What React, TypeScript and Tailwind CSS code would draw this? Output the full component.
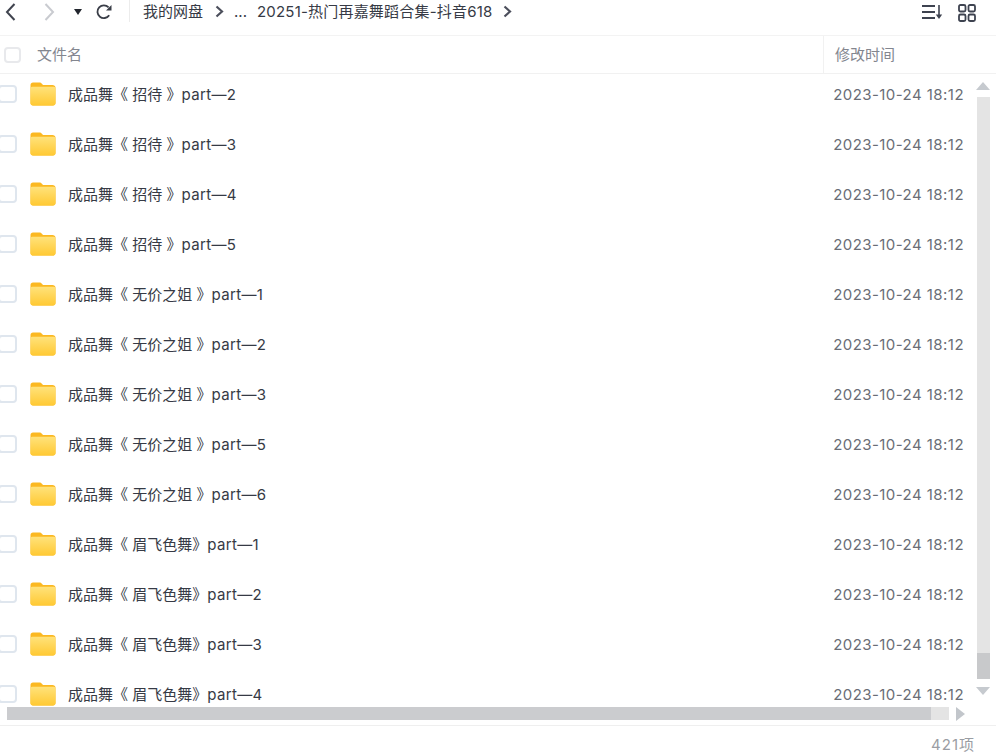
import React from 'react'

const FONT = "font-['Inter','Noto_Sans_CJK_SC',sans-serif]"

const rows = [
  ['成品舞《 招待 》', 'part—2'],
  ['成品舞《 招待 》', 'part—3'],
  ['成品舞《 招待 》', 'part—4'],
  ['成品舞《 招待 》', 'part—5'],
  ['成品舞《 无价之姐 》', 'part—1'],
  ['成品舞《 无价之姐 》', 'part—2'],
  ['成品舞《 无价之姐 》', 'part—3'],
  ['成品舞《 无价之姐 》', 'part—5'],
  ['成品舞《 无价之姐 》', 'part—6'],
  ['成品舞《 眉飞色舞》', 'part—1'],
  ['成品舞《 眉飞色舞》', 'part—2'],
  ['成品舞《 眉飞色舞》', 'part—3'],
  ['成品舞《 眉飞色舞》', 'part—4'],
]

function FolderIcon() {
  return (
    <svg width="26" height="24" viewBox="0 0 26 24" className="shrink-0">
      <defs>
        <linearGradient id="folderFront" x1="0" y1="0" x2="0" y2="1">
          <stop offset="0" stopColor="#ffe27a" />
          <stop offset="1" stopColor="#ffc933" />
        </linearGradient>
      </defs>
      <path d="M0.500 3C.500 1.500 1.500.500 3 .500h6.500c1 0 1.600.4 2.200 1.100L13 3h9.500C24 3 25.500 4 25.500 5.500v15.500c0 1.500-1 2.500-2.500 2.500H3C1.500 23.500.500 22.500.500 21z" fill="#fbb821" />
      <path d="M0.500 6.500c0-1 .7-1.700 1.700-1.700h21.600c1 0 1.700.7 1.700 1.700V21c0 1.500-1 2.500-2.500 2.500H3C1.500 23.500.500 22.500.500 21z" fill="url(#folderFront)" />
    </svg>
  )
}

function Chevron({ className }: { className: string }) {
  return (
    <svg width="9" height="13" viewBox="0 0 9 13" className={className}>
      <path d="M1.500 1.500 7 6.500l-5.500 5" fill="none" stroke="currentColor" strokeWidth="2.200" />
    </svg>
  )
}

function Toolbar() {
  return (
    <div className="flex h-[36px] shrink-0 items-start border-b border-[#f3f3f3] pl-[5px]">
      <svg width="11" height="18" viewBox="0 0 11 18" className="mt-[3px] text-[#40444f]">
        <path d="M9.500 1 2 9l7.500 8" fill="none" stroke="currentColor" strokeWidth="2" />
      </svg>
      <svg width="11" height="18" viewBox="0 0 11 18" className="ml-[28px] mt-[3px] text-[#c9cbd0]">
        <path d="M1.500 1 9 9l-7.500 8" fill="none" stroke="currentColor" strokeWidth="2" />
      </svg>
      <svg width="8" height="6" viewBox="0 0 8 6" className="ml-[19px] mt-[9px] text-[#22262e]">
        <path d="M0 0h8L4 6z" fill="currentColor" />
      </svg>
      <svg width="16" height="16" viewBox="0 0 16 16" className="ml-[14px] mt-[4px] text-[#3a3e48]">
        <path d="M13.200 11.200A6.400 6.400 0 1 1 12.600 3.400" fill="none" stroke="currentColor" strokeWidth="1.800" />
        <path d="M15.500 1v5.500H10z" fill="currentColor" />
      </svg>
      <div className="ml-[17px] h-[22px] w-px bg-[#ececec]" />
      <div className="ml-[13px] flex h-[22px] items-center text-[15px] leading-none text-[#363a45]">
        <span>我的网盘</span>
        <Chevron className="ml-[12px] text-[#4c4f5c]" />
        <span className="ml-[10px]">...</span>
        <span className="ml-[10px] tracking-[0.2px]">20251-热门再嘉舞蹈合集-抖音618</span>
        <Chevron className="ml-[11px] text-[#4c4f5c]" />
      </div>
      <div className="ml-auto mr-[20px] mt-[4px] flex items-start gap-[15px] text-[#3e4350]">
        <svg width="21" height="16" viewBox="0 0 21 16">
          <path d="M0 2h13M0 8h13M0 14h13" stroke="currentColor" strokeWidth="1.800" />
          <path d="M17 1v12" stroke="currentColor" strokeWidth="1.600" />
          <path d="M13.800 10.500h6.400L17 15z" fill="currentColor" />
        </svg>
        <svg width="18" height="18" viewBox="0 0 18 18" fill="none" stroke="currentColor" strokeWidth="1.800">
          <rect x="1" y="1" width="6.500" height="6.500" rx="1.500" />
          <rect x="10.500" y="1" width="6.500" height="6.500" rx="1.500" />
          <rect x="1" y="10.500" width="6.500" height="6.500" rx="1.500" />
          <rect x="10.500" y="10.500" width="6.500" height="6.500" rx="1.500" />
        </svg>
      </div>
    </div>
  )
}

function Header() {
  return (
    <div className="flex h-[38px] shrink-0 items-center border-b border-[#f1f1f1] text-[15px] text-[#83868f]">
      <div className="ml-[4px] h-[16px] w-[17px] rounded-[4px] border-2 border-[#e8e9ec]" />
      <span className="ml-[16px] pt-[2px]">文件名</span>
      <div className="ml-auto flex h-full w-[173px] items-center border-l border-[#f1f1f1] pl-[11px] pt-[2px]">修改时间</div>
    </div>
  )
}

function Row({ name, part }: { name: string; part: string }) {
  return (
    <div className="flex h-[50px] shrink-0 items-center">
      <div className="ml-[-2px] h-[18px] w-[19px] shrink-0 rounded-[4px] border-2 border-[#dfe6ee]" />
      <div className="ml-[13px]"><FolderIcon /></div>
      <span className="ml-[12px] whitespace-nowrap text-[15px] leading-none text-[#363a45]">
        {name}<span className="tracking-[0.35px]">{part}</span>
      </span>
      <span className="ml-auto mr-[12px] whitespace-nowrap text-[15px] leading-none tracking-[0.45px] text-[#6a6d76]">2023-10-24 18:12</span>
    </div>
  )
}

function VerticalScrollbar() {
  return (
    <div className="flex w-[20px] shrink-0 flex-col items-start pt-[8px]">
      <div className="h-0 w-0 border-x-[7.5px] border-b-[8px] border-x-transparent border-b-[#c6cacf]" />
      <div className="ml-[1px] mt-[7px] flex h-[582px] w-[13px] flex-col justify-end bg-[#e4e4e4]">
        <div className="h-[26px] w-full bg-[#c8c9cb]" />
      </div>
      <div className="mt-[8px] h-0 w-0 border-x-[7.5px] border-t-[8px] border-x-transparent border-t-[#c6cacf]" />
    </div>
  )
}

function HorizontalScrollbar() {
  return (
    <div className="flex h-[19px] shrink-0 items-start bg-white pl-[7px] pt-[1px]">
      <div className="h-[13px] w-[942px] bg-[#e4e4e4]">
        <div className="h-full w-[924px] bg-[#cbcccf]" />
      </div>
      <div className="ml-[7px] h-0 w-0 border-y-[7px] border-l-[9px] border-y-transparent border-l-[#c2c6cb]" />
    </div>
  )
}

export default function App() {
  return (
    <div className={`flex h-[756px] w-[996px] flex-col overflow-hidden bg-white ${FONT}`}>
      <Toolbar />
      <Header />
      {/* 列表区域，第一行被滚动遮住一点 */}
      <div className="flex h-[632px] shrink-0 overflow-hidden">
        <div className="min-w-0 flex-1">
          <div className="mt-[-5px] flex flex-col">
            {rows.map(([name, part]) => <Row key={name + part} name={name} part={part} />)}
          </div>
        </div>
        <VerticalScrollbar />
      </div>
      <HorizontalScrollbar />
      <div className="flex h-[31px] shrink-0 items-center justify-end border-t border-[#efefef] pr-[21px] pt-[7px] text-[15px] leading-none tracking-[1px] text-[#9a9da3]">
        421项
      </div>
    </div>
  )
}
